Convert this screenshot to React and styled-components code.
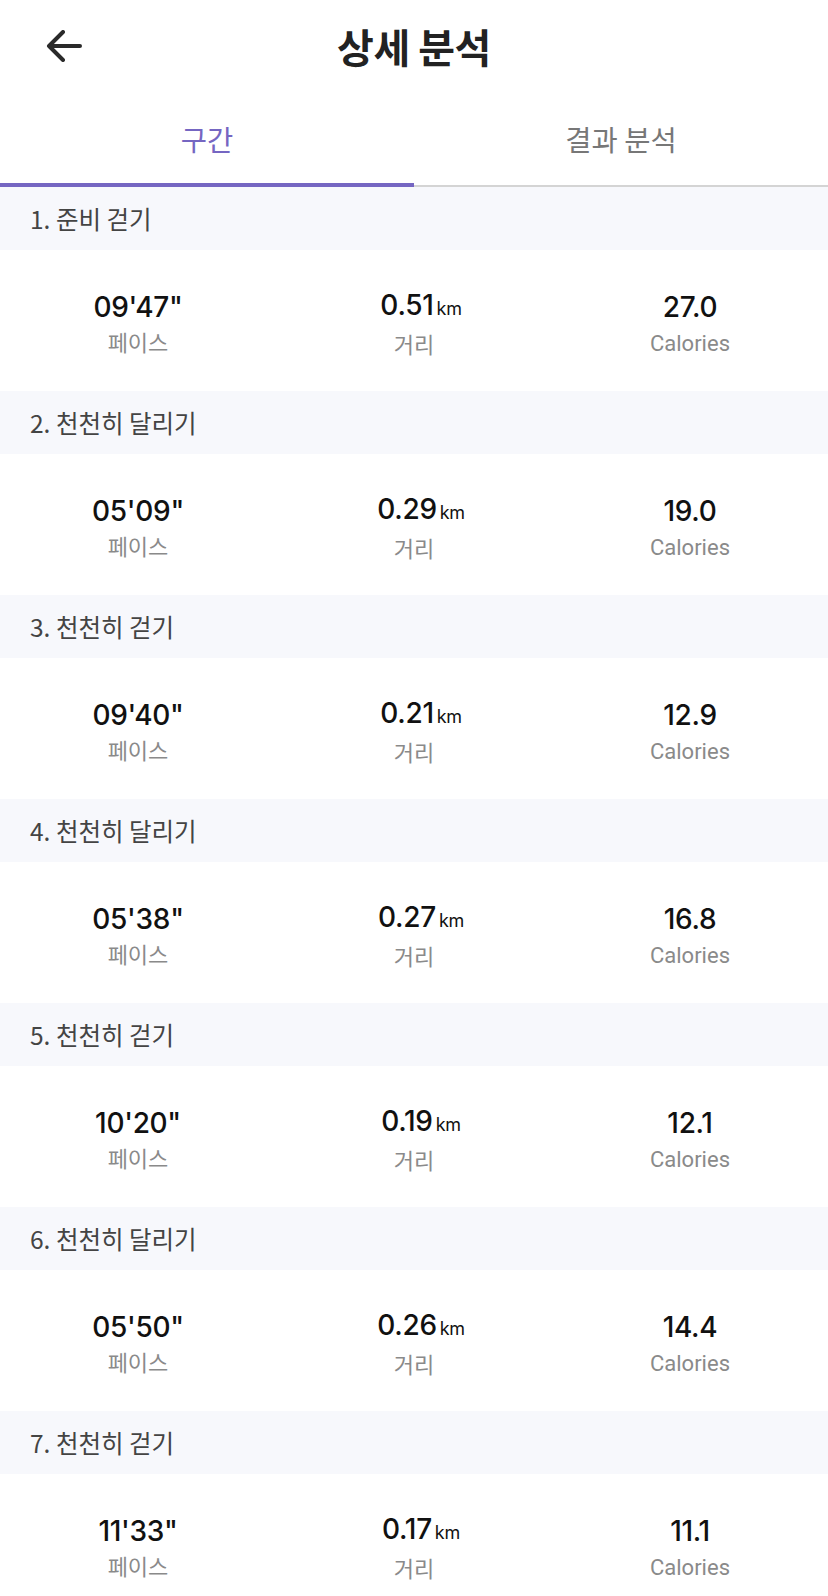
import React from 'react';
import styled, { createGlobalStyle } from 'styled-components';

const GlobalStyle = createGlobalStyle`
  html, body {
    margin: 0;
    padding: 0;
    background: #ffffff;
  }
  body {
    font-family: Roboto, "Noto Sans CJK KR", "Noto Sans", sans-serif;
    -webkit-font-smoothing: antialiased;
  }
  * {
    box-sizing: border-box;
  }
`;

const sections = [
  { title: '1. 준비 걷기', pace: `09'47"`, dist: '0.51', cal: '27.0' },
  { title: '2. 천천히 달리기', pace: `05'09"`, dist: '0.29', cal: '19.0' },
  { title: '3. 천천히 걷기', pace: `09'40"`, dist: '0.21', cal: '12.9' },
  { title: '4. 천천히 달리기', pace: `05'38"`, dist: '0.27', cal: '16.8' },
  { title: '5. 천천히 걷기', pace: `10'20"`, dist: '0.19', cal: '12.1' },
  { title: '6. 천천히 달리기', pace: `05'50"`, dist: '0.26', cal: '14.4' },
  { title: '7. 천천히 걷기', pace: `11'33"`, dist: '0.17', cal: '11.1' }
];

const Page = styled.div`
  width: 100%;
  min-height: 100vh;
  background: #ffffff;
`;

const TopBar = styled.header`
  position: relative;
  height: 92px;
  display: flex;
  align-items: center;
  justify-content: center;
`;

const BackButton = styled.button`
  position: absolute;
  left: 44px;
  top: 26px;
  width: 40px;
  height: 40px;
  padding: 0;
  border: none;
  background: none;
  display: flex;
  align-items: center;
  justify-content: center;
  cursor: pointer;
`;

const Title = styled.h1`
  margin: 0;
  font-family: "Noto Sans CJK KR", sans-serif;
  font-size: 40px;
  font-weight: 700;
  color: #222222;
  letter-spacing: -0.5px;
`;

const TabBar = styled.nav`
  display: flex;
`;

const Tab = styled.div`
  flex: 1;
  height: 95px;
  display: flex;
  align-items: center;
  justify-content: center;
  padding-top: ${p => (p.$active ? '2px' : '0')};
  font-family: "Noto Sans CJK KR", sans-serif;
  font-size: 28.5px;
  font-weight: 400;
  color: ${p => (p.$active ? '#7566c2' : '#777777')};
  border-bottom: ${p => (p.$active ? '4px solid #7566c2' : '2px solid #d4d4d4')};
`;

const SectionHeader = styled.div`
  height: 63px;
  display: flex;
  align-items: center;
  padding-left: 30px;
  background: #f7f8fc;
  font-family: "Noto Sans CJK KR", sans-serif;
  font-size: 24.5px;
  font-weight: 400;
  color: #444444;
`;

const StatsRow = styled.div`
  height: 141px;
  display: grid;
  grid-template-columns: repeat(3, 1fr);
  align-items: center;
`;

const Stat = styled.div`
  display: flex;
  flex-direction: column;
  align-items: center;
  padding-top: 6px;
`;

const Value = styled.div`
  font-family: Inter, Roboto, sans-serif;
  font-size: 28px;
  font-weight: 500;
  color: #111111;
  line-height: 34px;
  letter-spacing: -0.3px;
  display: flex;
  align-items: baseline;
  margin-left: ${p => (p.$unit ? '14px' : '0')};
`;

const Unit = styled.span`
  font-size: 18px;
  font-weight: 400;
  margin-left: 3px;
`;

const Label = styled.div`
  margin-top: 7px;
  font-family: Roboto, "Noto Sans CJK KR", sans-serif;
  font-size: 22px;
  color: #8a8a8a;
  line-height: 26px;
`;

const BackArrow = () => (
  <svg width="36" height="32" viewBox="0 0 36 32" fill="none">
    <path
      d="M34 16H3M17 2L3 16l14 14"
      stroke="#2a2a2a"
      strokeWidth="4"
      strokeLinecap="round"
      strokeLinejoin="round"
    />
  </svg>
);

const Section = ({ title, pace, dist, cal }) => (
  <section>
    <SectionHeader>{title}</SectionHeader>
    <StatsRow>
      <Stat>
        <Value>{pace}</Value>
        <Label>페이스</Label>
      </Stat>
      <Stat>
        <Value $unit>
          {dist}
          <Unit>km</Unit>
        </Value>
        <Label>거리</Label>
      </Stat>
      <Stat>
        <Value>{cal}</Value>
        <Label>Calories</Label>
      </Stat>
    </StatsRow>
  </section>
);

export default function App() {
  return (
    <>
      <GlobalStyle />
      <Page>
        <TopBar>
          <BackButton aria-label="back">
            <BackArrow />
          </BackButton>
          <Title>상세 분석</Title>
        </TopBar>
        <TabBar>
          <Tab $active>구간</Tab>
          <Tab>결과 분석</Tab>
        </TabBar>
        {sections.map(s => (
          <Section key={s.title} {...s} />
        ))}
      </Page>
    </>
  );
}
